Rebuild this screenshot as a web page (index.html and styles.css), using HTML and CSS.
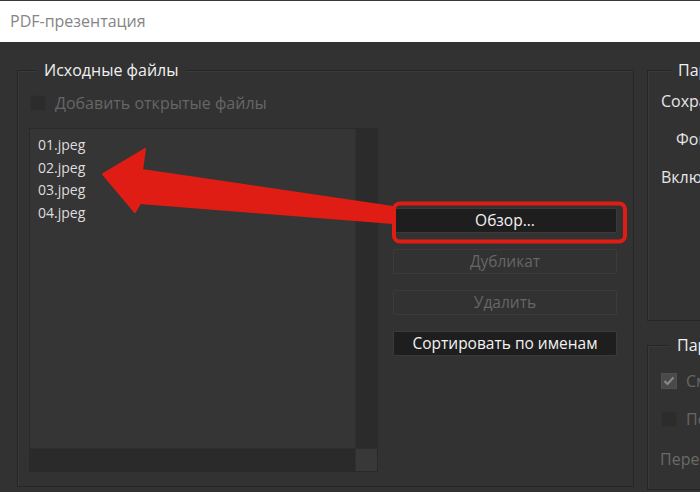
FILE: index.html
```html
<!DOCTYPE html>
<html lang="ru">
<head>
    <meta charset="UTF-8">
    <title>PDF-презентация</title>
    <link rel="stylesheet" href="styles.css">
</head>
<body>

    <div class="titlebar">PDF-презентация</div>

    <div class="main">
        <div class="group group-source">
            <div class="group-title">Исходные файлы</div>
            <label class="check-row disabled">
                <span class="checkbox"></span>
                Добавить открытые файлы
            </label>
            <div class="source-body">
                <div class="filelist">
                    <div class="filelist-view">
                        <ul class="files">
                            <li>01.jpeg</li>
                            <li>02.jpeg</li>
                            <li>03.jpeg</li>
                            <li>04.jpeg</li>
                        </ul>
                        <div class="vscroll"></div>
                    </div>
                    <div class="hscroll-row">
                        <div class="hscroll"></div>
                        <div class="corner"></div>
                    </div>
                </div>
                <div class="actions">
                    <button class="btn btn-dark">Обзор...</button>
                    <button class="btn" disabled>Дубликат</button>
                    <button class="btn" disabled>Удалить</button>
                    <button class="btn btn-dark">Сортировать по именам</button>
                </div>
            </div>
        </div>

        <div class="side">
            <div class="group group-output">
                <div class="group-title">Параметры вывода</div>
                <div class="opt">Сохранить как:</div>
                <div class="opt opt-indent">Фон:</div>
                <div class="opt">Включить:</div>
            </div>
            <div class="group group-show">
                <div class="group-title">Параметры презентации</div>
                <label class="check-row disabled">
                    <span class="checkbox checked">
                        <svg width="12" height="10" viewBox="0 0 12 10"><path d="M1.5 5 L4.5 8 L10.5 1.5" fill="none" stroke="#8a8a8a" stroke-width="2"/></svg>
                    </span>
                    Сменять каждые
                </label>
                <label class="check-row disabled">
                    <span class="checkbox"></span>
                    Повторять после последней страницы
                </label>
                <div class="opt disabled-text">Переход:</div>
            </div>
        </div>
    </div>

    <!-- annotation drawn over the dialog -->
    <svg class="annotation" width="700" height="492" viewBox="0 0 700 492">
        <polygon points="103,174 145,149 142,170 393,207 393,223 140,203 135,212"
                 fill="#e01d14" stroke="#e01d14" stroke-width="2" stroke-linejoin="round"/>
        <rect x="394" y="203.5" width="231" height="38" rx="6" ry="6"
              fill="none" stroke="#e01d14" stroke-width="4"/>
    </svg>

</body>
</html>
```

FILE: styles.css
```css
body {
    margin: 0;
    width: 700px;
    height: 492px;
    overflow: hidden;
    background: #323232;
    font-family: "Open Sans", "Noto Sans", sans-serif;
    color: #e6e6e6;
    position: relative;
}
.titlebar {
    height: 41px;
    border-top: 1px solid #3a3a3a;
    background: #fff;
    color: #858585;
    font-size: 16px;
    line-height: 41px;
    padding-left: 10px;
}
.main {
    display: flex;
    gap: 13px;
    padding: 28px 0 0 17px;
}
.group {
    border: 1px solid #262626;
    box-shadow: inset 1px 1px 0 #3a3a3a;
    box-sizing: border-box;
}
.group-title {
    width: max-content;
    margin: -11px 0 0 8px;
    padding: 0 7px;
    background: #323232;
    font-size: 16px;
    line-height: 20px;
    color: #f0f0f0;
    white-space: nowrap;
}
.group-source {
    width: 617px;
    height: 417px;
    padding: 0 0 0 11px;
    flex-shrink: 0;
}
.check-row {
    display: flex;
    align-items: center;
    gap: 9px;
    font-size: 16px;
    height: 18px;
    margin-top: 14px;
    white-space: nowrap;
}
.disabled {
    color: #666;
}
.checkbox {
    flex-shrink: 0;
    width: 14px;
    height: 14px;
    margin-left: 1px;
    background: #2c2c2c;
    border: 1px solid #303030;
    display: flex;
    align-items: center;
    justify-content: center;
}
.checkbox.checked {
    background: #4a4a4a;
    border-color: #505050;
}
.source-body {
    display: flex;
    gap: 15px;
    margin-top: 16px;
}
.filelist {
    width: 349px;
    height: 344px;
    border: 1px solid #2a2a2a;
    box-sizing: border-box;
    background: #353535;
    display: flex;
    flex-direction: column;
}
.filelist-view {
    flex: 1;
    display: flex;
}
.files {
    flex: 1;
    list-style: none;
    margin: 0;
    padding: 5px 0 0 8px;
    font-size: 14px;
    line-height: 22.5px;
    color: #dedede;
}
.vscroll {
    width: 21px;
    background: #2b2b2b;
    border-left: 1px solid #303030;
}
.hscroll-row {
    height: 22px;
    display: flex;
    border-top: 1px solid #2e2e2e;
}
.hscroll {
    flex: 1;
    background: #2a2a2a;
}
.corner {
    width: 21px;
    background: #383838;
    border-left: 1px solid #303030;
}
.actions {
    width: 224px;
    display: flex;
    flex-direction: column;
    align-items: stretch;
    gap: 16px;
    padding-top: 80px;
}
.btn {
    height: 25px;
    border: 1px solid #3b3b3b;
    border-radius: 2px;
    background: #323232;
    color: #666;
    font-family: inherit;
    font-size: 15.5px;
    line-height: 21px;
    padding: 0;
}
.btn-dark {
    background: #1e1e1e;
    border-color: #3a3a3a;
    color: #f2f2f2;
}
.side {
    display: flex;
    flex-direction: column;
    gap: 24px;
}
.group-output {
    width: 200px;
    height: 251px;
    padding-left: 13px;
}
.group-output .group-title,
.group-show .group-title {
    margin-left: 10px;
}
.opt {
    font-size: 16px;
    line-height: 20px;
    margin-top: 18px;
    white-space: nowrap;
}
.group-output .group-title + .opt {
    margin-top: 11px;
}
.opt-indent {
    margin-left: 15px;
}
.group-show {
    width: 200px;
    height: 145px;
    padding-left: 12px;
}
.group-show .check-row {
    margin-top: 17px;
}
.group-show .check-row + .check-row {
    margin-top: 20px;
}
.disabled-text {
    color: #6a6a6a;
    margin-top: 21px;
}
.annotation {
    position: absolute;
    top: 0;
    left: 0;
    pointer-events: none;
}
```
